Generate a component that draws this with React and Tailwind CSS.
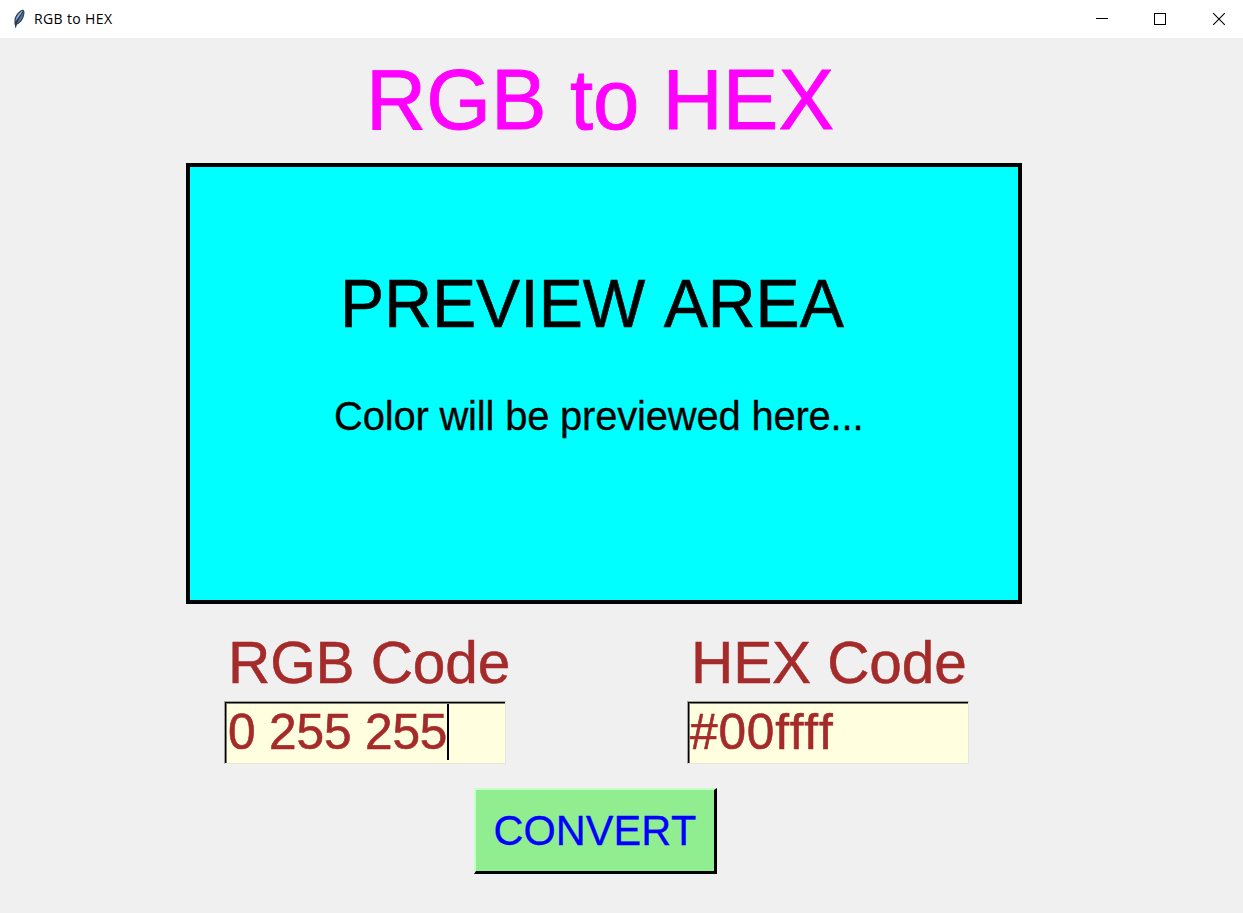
import React from "react";

function Feather() {
  return (
    <svg width="14" height="20" viewBox="0 0 14 20" className="shrink-0">
      <path d="M11.2 0.6C7.2 1.6 3 6.2 2.5 11L2.4 14.6L3.6 19.2L4.6 15.8C9.2 14.2 12.6 8.4 12.5 2.8Z" fill="#2f4057" />
      <path d="M10.7 1.8C7.8 3 4.2 7.2 3.5 12.2L5.2 10L9.8 3.8Z" fill="#9ab8d8" />
      <path d="M11.4 2.8C11.2 8 8.6 12.6 4.9 14.4L8 8.6Z" fill="#5379a8" />
      <path d="M10.6 3L5.2 11.4L3.6 18.6" fill="none" stroke="#2a3546" strokeWidth="0.7" />
    </svg>
  );
}

function TitleBar() {
  return (
    <header className="flex h-[38px] shrink-0 items-center bg-white pl-[12px]">
      <Feather />
      <span className="ml-[8px] font-['Open_Sans',sans-serif] text-[14px] leading-5 tracking-[0.36px] text-black">RGB to HEX</span>
      <div className="ml-auto flex">
        <svg width="58" height="38" shapeRendering="crispEdges">
          <path d="M23 18.5H35" stroke="#000" />
        </svg>
        <svg width="58" height="38" shapeRendering="crispEdges">
          <rect x="23.5" y="13.5" width="11" height="11" fill="none" stroke="#000" />
        </svg>
        <svg width="54" height="38">
          <path d="M24.2 13.2L35.8 24.8M35.8 13.2L24.2 24.8" stroke="#000" strokeWidth="1.1" />
        </svg>
      </div>
    </header>
  );
}

function Entry({ label, value, valueClass, caret }) {
  return (
    <label className="flex w-[282px] flex-col">
      <span className="origin-[0_61px] scale-y-[1.02] pt-px pl-[4px] text-[58.6px] leading-[80px] tracking-[-0.15px] whitespace-nowrap [-webkit-text-stroke:0.5px_#a52a2a]">
        {label}
      </span>
      <span className="-mt-[2px] flex h-[63px] border border-t-[#a0a0a0] border-r-[#e6e6da] border-b-[#e6e6da] border-l-[#a0a0a0]">
        <span className="flex grow items-start border-t border-l border-black bg-[#ffffe0] pl-[2px] text-[49.6px] leading-[56px] shadow-[inset_1px_1px_0_#7c7c6d]">
          <span className={valueClass}>{value}</span>
          {caret && <span className="mt-px h-[56px] w-[2px] bg-black" />}
        </span>
      </span>
    </label>
  );
}

export default function App() {
  return (
    <div className="flex h-[913px] w-[1243px] flex-col overflow-hidden bg-[#f0f0f0] font-['Liberation_Sans',Arial,sans-serif] [font-kerning:none]">
      <TitleBar />
      <main className="flex flex-col">
        <h1 className="origin-[0_91px] scale-y-[1.02] pl-[366px] text-[83.4px] leading-[125px] whitespace-nowrap text-[#ff00ff] [-webkit-text-stroke:0.8px_#ff00ff]">
          RGB to HEX
        </h1>
        <section className="ml-[186px] flex h-[441px] w-[836px] flex-col border-4 border-black bg-[#00ffff] pt-[96px] whitespace-nowrap text-black">
          <p className="origin-[0_64px] scale-y-[1.03] pl-[150px] text-[66.2px] leading-[82px] [-webkit-text-stroke:0.6px_#000]">PREVIEW AREA</p>
          <p className="mt-[40px] pl-[144px] text-[39.9px] leading-[62px] tracking-[-0.16px] [-webkit-text-stroke:0.3px_#000]">
            Color will be previewed here...
          </p>
        </section>
        <div className="mt-[18px] ml-[224px] flex gap-[181px] text-[#a52a2a]">
          <Entry label="RGB Code" value="0 255 255" valueClass="mt-px tracking-[-0.15px] [-webkit-text-stroke:0.6px_#a52a2a]" caret />
          <Entry label="HEX Code" value="#00ffff" valueClass="mt-px -ml-px tracking-[0.8px] [-webkit-text-stroke:0.6px_#a52a2a]" />
        </div>
        <button className="mt-[24px] ml-[474px] h-[86px] w-[243px] border-t-2 border-r-[3px] border-b-[3px] border-l-2 border-t-[#c8ffc8] border-r-black border-b-black border-l-[#c8ffc8] bg-[#90ee90] text-[41.5px] leading-[80px] text-[#0000ff]">
          <span className="block origin-[0_54px] scale-y-[1.035] [-webkit-text-stroke:0.3px_#00f]">CONVERT</span>
        </button>
      </main>
    </div>
  );
}
